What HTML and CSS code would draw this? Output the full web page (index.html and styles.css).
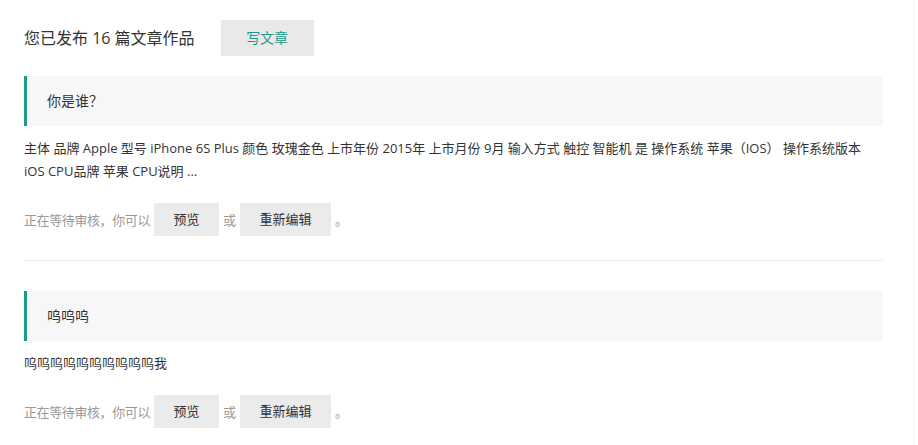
FILE: index.html
```html
<!DOCTYPE html>
<html lang="zh-CN">
<head>
<meta charset="utf-8">
<title>文章作品</title>
<link rel="stylesheet" href="styles.css">
</head>
<body>
<div class="page">
  <div class="content">
    <div class="header">
      <h2 class="count">您已发布 16 篇文章作品</h2>
      <a class="write-btn">写文章</a>
    </div>

    <div class="article">
      <div class="article-title">你是谁？</div>
      <p class="article-desc">主体 品牌 Apple 型号 iPhone 6S Plus 颜色 玫瑰金色 上市年份 2015年 上市月份 9月 输入方式 触控 智能机 是 操作系统 苹果（IOS） 操作系统版本 iOS CPU品牌 苹果 CPU说明 ...</p>
      <div class="status">
        <span class="status-text">正在等待审核，你可以</span>
        <a class="action-btn">预览</a>
        <span class="status-text">或</span>
        <a class="action-btn">重新编辑</a>
        <span class="status-text">。</span>
      </div>
    </div>

    <div class="divider"></div>

    <div class="article">
      <div class="article-title">呜呜呜</div>
      <p class="article-desc">呜呜呜呜呜呜呜呜呜呜我</p>
      <div class="status">
        <span class="status-text">正在等待审核，你可以</span>
        <a class="action-btn">预览</a>
        <span class="status-text">或</span>
        <a class="action-btn">重新编辑</a>
        <span class="status-text">。</span>
      </div>
    </div>
  </div>
</div>
</body>
</html>
```

FILE: styles.css
```css
html, body {
  margin: 0;
  padding: 0;
  background: #fff;
}
body {
  font-family: "Open Sans", "Noto Sans CJK SC", sans-serif;
  color: #333;
  text-spacing-trim: space-all;
}
.page {
  width: 913px;
  min-height: 445px;
  border-right: 1px solid #f2f2f2;
  box-sizing: content-box;
}
.content {
  width: 859px;
  padding: 20px 0 0 24px;
}
.header {
  display: flex;
  align-items: center;
  height: 36px;
}
.count {
  margin: 0;
  font-size: 16px;
  font-weight: normal;
  color: #333;
  line-height: 36px;
}
.write-btn {
  margin-left: 26px;
  width: 93px;
  height: 36px;
  line-height: 36px;
  text-align: center;
  background: #e9e9e9;
  color: #1a9b87;
  font-size: 14px;
}
.article {
  margin-top: 20px;
}
.article-title {
  height: 50px;
  line-height: 50px;
  background: #f7f7f7;
  border-left: 3px solid #1a9b87;
  padding-left: 20px;
  font-size: 14px;
  color: #333;
}
.article-desc {
  margin: 0;
  padding: 11px 0 0;
  font-size: 13px;
  line-height: 23px;
  color: #333;
}
.status {
  display: flex;
  align-items: center;
  margin-top: 20px;
  height: 33px;
  font-size: 13px;
}
.status-text {
  color: #999;
}
.status-text:first-child {
  letter-spacing: -0.4px;
}
.action-btn {
  height: 33px;
  line-height: 33px;
  padding: 0 19.5px;
  background: #ebebeb;
  color: #333;
  margin: 0 4px;
}
.divider {
  height: 1px;
  background: #eee;
  margin-top: 24px;
  margin-bottom: -10px;
}
.divider + .article {
  margin-top: 40px;
}
```
